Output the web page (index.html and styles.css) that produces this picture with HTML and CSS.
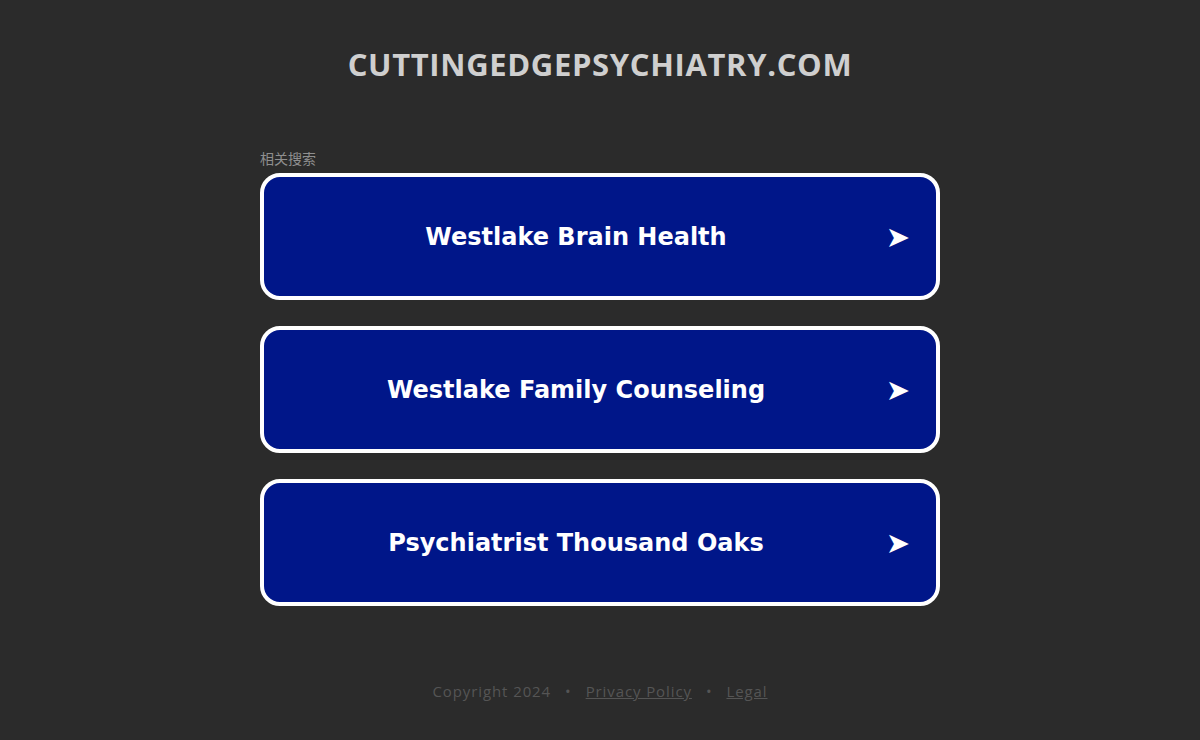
FILE: index.html
```html
<!DOCTYPE html>
<html lang="en">
<head>
<meta charset="utf-8">
<title>cuttingedgepsychiatry.com</title>
<link rel="stylesheet" href="styles.css">
</head>
<body>
<div class="page">
  <h1 class="domain">CUTTINGEDGEPSYCHIATRY.COM</h1>
  <div class="searches">
    <div class="label">相关搜索</div>
    <a class="btn" href="#"><span class="btn-text">Westlake Brain Health</span><span class="arrow">&#10148;</span></a>
    <a class="btn" href="#"><span class="btn-text">Westlake Family Counseling</span><span class="arrow">&#10148;</span></a>
    <a class="btn" href="#"><span class="btn-text">Psychiatrist Thousand Oaks</span><span class="arrow">&#10148;</span></a>
  </div>
  <div class="footer">
    <span>Copyright 2024</span>
    <span class="dot">&bull;</span>
    <a href="#">Privacy Policy</a>
    <span class="dot">&bull;</span>
    <a href="#">Legal</a>
  </div>
</div>
</body>
</html>
```

FILE: styles.css
```css
html, body {
  margin: 0;
  padding: 0;
  background: #2b2b2b;
}
.page {
  width: 1200px;
  height: 740px;
  display: flex;
  flex-direction: column;
  align-items: center;
}
.domain {
  margin: 44px 0 0;
  font-family: "Open Sans", "Noto Sans", sans-serif;
  font-weight: 700;
  font-size: 31px;
  line-height: 40px;
  color: #cfcfcf;
  letter-spacing: 0.65px;
}
.searches {
  width: 680px;
  margin-top: 65px;
  display: flex;
  flex-direction: column;
  gap: 26px;
}
.label {
  font-family: "Noto Sans CJK SC", sans-serif;
  font-size: 14px;
  line-height: 18px;
  color: #8f8f8f;
  margin-bottom: -20px;
  height: 18px;
}
.btn {
  box-sizing: border-box;
  height: 127px;
  border: 4px solid #ffffff;
  border-radius: 20px;
  background: #001689;
  display: flex;
  align-items: center;
  justify-content: center;
  position: relative;
  text-decoration: none;
  color: #ffffff;
}
.btn-text {
  font-family: "DejaVu Sans", Verdana, sans-serif;
  font-weight: 700;
  font-size: 24px;
  margin-right: 48px;
}
.arrow {
  position: absolute;
  right: 26px;
  top: 50%;
  transform: translateY(-50%);
  font-family: "DejaVu Sans", sans-serif;
  font-size: 29px;
  line-height: 1;
  color: #ffffff;
}
.footer {
  margin-top: 75px;
  font-family: "Open Sans", "Noto Sans", sans-serif;
  font-size: 15px;
  letter-spacing: 0.9px;
  color: #555555;
  display: flex;
  gap: 14px;
}
.footer a {
  color: #555555;
  text-decoration: underline;
}
.dot {
  color: #555555;
}
```
